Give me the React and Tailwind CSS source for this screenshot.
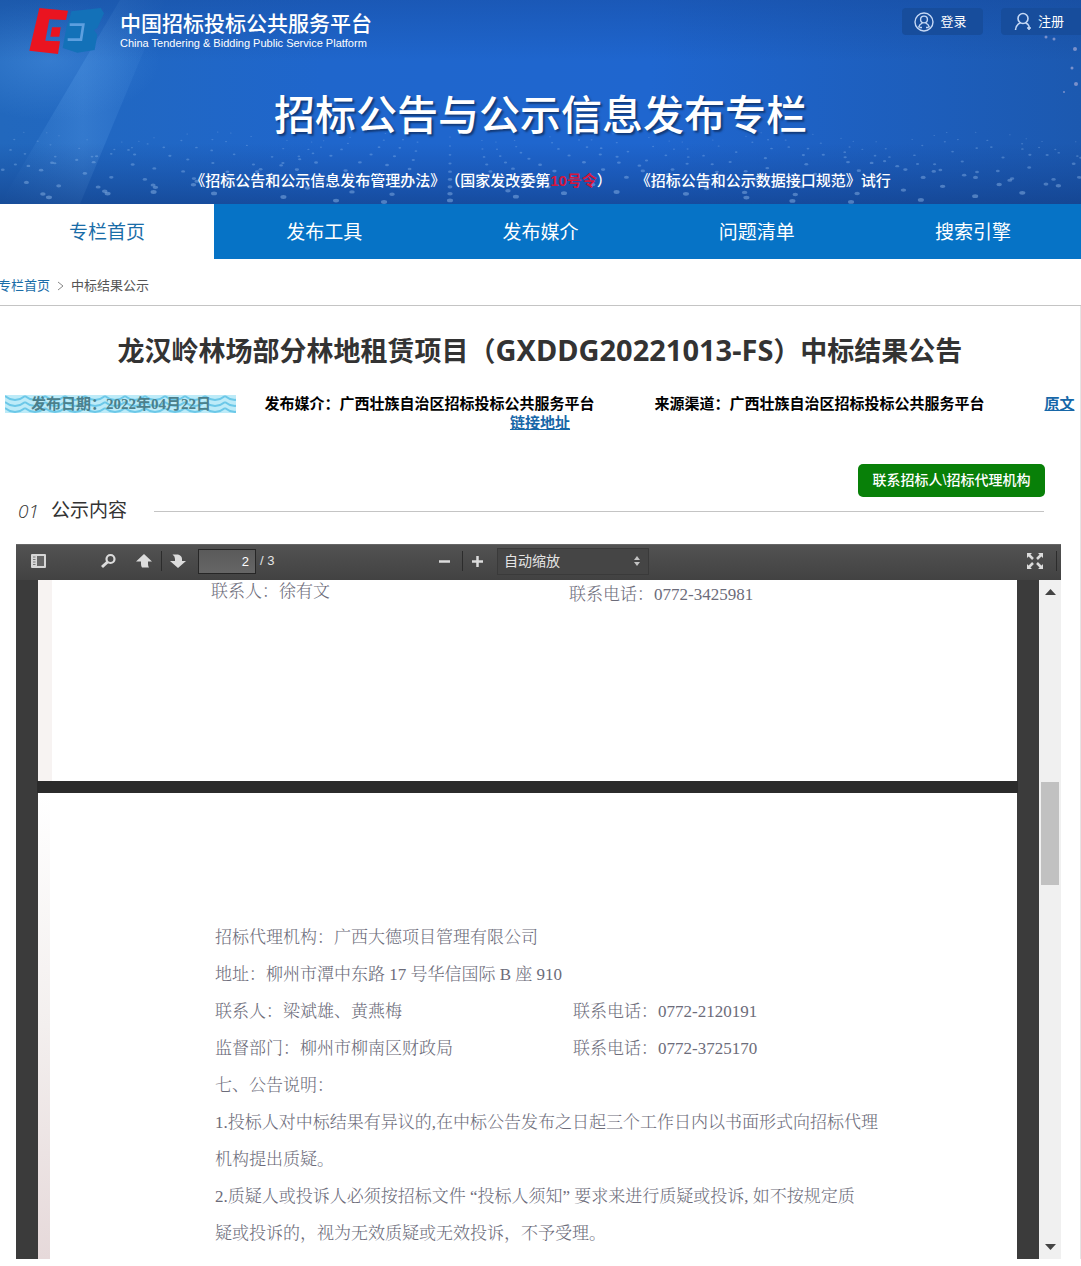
import { useState } from "react";

const navItems = ["专栏首页", "发布工具", "发布媒介", "问题清单", "搜索引擎"];

// dotted wave field at the bottom of the banner, streams fan out from the middle
const dots = [];
for (let i = -34; i <= 34; i++) {
  for (let row = 0; row < 9; row++) {
    const depth = row / 8;
    const x = 450 + i * (24 + depth * depth * 34) + Math.sin(i * 1.7) * 8;
    if (x < -10 || x > 1091) continue;
    const y = 137 + depth * 60 + Math.sin(i * 0.8 + row * 0.3) * 5;
    dots.push({ x, y, r: 0.5 + depth * 1.4, o: 0.25 + depth * 0.15 });
  }
}

function BannerBackground() {
  return (
    <svg
      className="absolute inset-0 h-full w-full"
      viewBox="0 0 1081 204"
      preserveAspectRatio="none"
      aria-hidden="true"
    >
      <defs>
        <linearGradient id="base" x1="0" y1="0" x2="1" y2="0">
          <stop offset="0" stopColor="#2268bd" />
          <stop offset="0.3" stopColor="#1f66cc" />
          <stop offset="0.6" stopColor="#1f66cf" />
          <stop offset="1" stopColor="#1c59b0" />
        </linearGradient>
        <linearGradient id="shade" x1="0" y1="0" x2="0" y2="1">
          <stop offset="0" stopColor="#123f8c" stopOpacity="0.35" />
          <stop offset="0.3" stopColor="#123f8c" stopOpacity="0" />
          <stop offset="0.7" stopColor="#123f8c" stopOpacity="0" />
          <stop offset="1" stopColor="#103a80" stopOpacity="0.6" />
        </linearGradient>
        <linearGradient id="ray" x1="0" y1="0" x2="1" y2="0">
          <stop offset="0" stopColor="#5ea2ea" stopOpacity="0" />
          <stop offset="0.5" stopColor="#5ea2ea" stopOpacity="0.3" />
          <stop offset="1" stopColor="#5ea2ea" stopOpacity="0" />
        </linearGradient>
        <radialGradient id="glow">
          <stop offset="0" stopColor="#4d94e2" stopOpacity="0.45" />
          <stop offset="1" stopColor="#4d94e2" stopOpacity="0" />
        </radialGradient>
      </defs>
      <rect width="1081" height="204" fill="url(#base)" />
      <path d="M120 0H165L80 204H0Z" fill="url(#ray)" />
      <ellipse cx="50" cy="60" rx="110" ry="60" fill="url(#glow)" />
      <rect width="1081" height="204" fill="url(#shade)" />
      {dots.map((d, index) => (
        <ellipse
          key={index}
          cx={d.x}
          cy={d.y}
          rx={d.r * 1.6}
          ry={d.r}
          fill="#a8cdf8"
          opacity={d.o}
        />
      ))}
      <g fill="#b9b6dd" opacity="0.6">
        <circle cx="1046" cy="37" r="1.5" />
        <circle cx="1054" cy="39" r="1.5" />
        <circle cx="1075" cy="49" r="2" />
        <circle cx="1072" cy="68" r="1.5" />
        <circle cx="1076" cy="84" r="2" />
        <circle cx="1064" cy="92" r="1" />
      </g>
    </svg>
  );
}

function Logo() {
  return (
    <svg width="76" height="48" viewBox="84 18 228 144" aria-hidden="true">
      <path
        d="M118 24L204 32L198 60L148 58L136 122L180 124L174 162L88 152Z"
        fill="#ea1420"
      />
      <path d="M156 82H182L178 110H151Z" fill="#ea1420" />
      <path
        d="M214 34L302 24L312 40L292 84L282 90L292 104L284 150L232 158L188 144L192 122L200 78L208 60Z"
        fill="#1371b8"
      />
      <path
        d="M209 74H250L243 119H203"
        fill="none"
        stroke="#5d9fdf"
        strokeWidth="8"
      />
    </svg>
  );
}

function Header() {
  return (
    <header className="relative h-[204px] overflow-hidden text-white">
      <BannerBackground />
      <div className="relative">
        <div className="flex h-[56px] items-start justify-between pl-7">
          <div className="flex gap-4 pt-[6px]">
            <Logo />
            <div>
              <p className="pt-[5px] text-[21px] leading-[26px] font-medium">
                中国招标投标公共服务平台
              </p>
              <p className="text-[11px] leading-[12px]">
                China Tendering &amp; Bidding Public Service Platform
              </p>
            </div>
          </div>
          <div className="flex gap-[18px] pt-2 text-[13px]">
            <button className="flex h-[27px] w-[81px] items-center justify-center gap-[6px] rounded-sm bg-[#174d9c] pr-1">
              <svg width="20" height="20" viewBox="0 0 20 20" fill="none" stroke="#c5d8f5" strokeWidth="1.4">
                <circle cx="10" cy="10" r="9" />
                <circle cx="10" cy="7.5" r="3.4" />
                <path d="M4.5 15.5Q5.5 12 8.5 10.8M15.5 15.5Q14.5 12 11.5 10.8M5.5 15.5H8M12 15.5H14.5" />
              </svg>
              登录
            </button>
            <button className="flex h-[27px] w-[80px] items-center justify-center gap-[6px] rounded-l-sm bg-[#174d9c] pr-1">
              <svg width="18" height="20" viewBox="0 0 18 20" fill="none" stroke="#c5d8f5" strokeWidth="1.6">
                <circle cx="9" cy="6.5" r="5" />
                <path d="M1.5 18Q2 12.5 6.5 10.8M11.5 10.8Q14 12 15 14M15 14V18M13 16H17" />
              </svg>
              注册
            </button>
          </div>
        </div>
        <h1 className="mt-[30px] text-center text-[41px] leading-[60px] font-medium [text-shadow:2px_2px_2px_#123a78]">
          招标公告与公示信息发布专栏
        </h1>
        <p className="mt-[24px] flex justify-center gap-6 text-[15px] leading-[22px] font-medium [text-spacing-trim:space-all]">
          <span>
            《招标公告和公示信息发布管理办法》（国家发改委第
            <span className="font-bold text-[#d3173f]">10号令</span>）
          </span>
          <span>《招标公告和公示数据接口规范》试行</span>
        </p>
      </div>
    </header>
  );
}

function DateStamp() {
  return (
    <span className="relative mr-[28px] inline-block w-[231px] text-center text-[#4b7f8b]">
      <svg className="absolute top-0 left-0 h-[18px] w-full" aria-hidden="true">
        <defs>
          <pattern id="waves" width="20" height="6" patternUnits="userSpaceOnUse">
            <rect width="20" height="6" fill="#bdebf8" />
            <path d="M0 1L5 4L10 5L15 4L20 1" stroke="#6cc8e8" strokeWidth="2" fill="none" />
          </pattern>
        </defs>
        <rect width="100%" height="100%" fill="url(#waves)" />
      </svg>
      <span className="relative">发布日期：2022年04月22日</span>
    </span>
  );
}

function Separator() {
  return <span className="h-5 w-px bg-[#2c2c2c]" />;
}

function Toolbar() {
  const [page, setPage] = useState("2");

  return (
    <div className="flex h-[36px] items-center border-t border-[#666] bg-linear-to-b from-[#525252] to-[#424242] pb-[3px] text-[13px] text-[#e4e4e4]">
      <div className="flex flex-1 items-center pl-[14px]">
        <button aria-label="切换侧栏">
          <svg width="17" height="16" viewBox="0 0 17 16">
            <rect x="1" y="1" width="15" height="14" rx="1" fill="#d6d6d6" />
            <rect x="7" y="3" width="7" height="10" fill="#666" />
            <path d="M3 4H5.5M3 6.5H5.5M3 9H5.5M3 11.5H5.5" stroke="#777" />
          </svg>
        </button>
        <button aria-label="查找" className="ml-[53px]">
          <svg width="17" height="16" viewBox="0 0 17 16" fill="none" stroke="#dcdcdc">
            <circle cx="10.5" cy="6" r="4" strokeWidth="2.2" />
            <path d="M7.5 9L2 14" strokeWidth="3" />
          </svg>
        </button>
        <button aria-label="上一页" className="ml-[19px]">
          <svg width="16" height="16" viewBox="0 0 16 16" fill="#dcdcdc">
            <path d="M8 1L16 8.5H12V11Q12 13 13 14.5H6Q5 13 5 11V8.5H0Z" />
          </svg>
        </button>
        <span className="ml-[9px] flex">
          <Separator />
        </span>
        <button aria-label="下一页" className="ml-[8px]">
          <svg width="16" height="16" viewBox="0 0 16 16" fill="#dcdcdc">
            <path d="M8 15L0 8H5V6Q5 3 2.5 1.5H8Q12 2.5 12 6V8H16Z" />
          </svg>
        </button>
        <input
          aria-label="页码"
          value={page}
          onChange={(e) => setPage(e.target.value)}
          className="ml-[12px] h-[25px] w-[58px] border border-[#262626] bg-linear-to-b from-[#5a5a5a] to-[#666] pr-[6px] text-right text-[13px] text-white"
        />
        <span className="ml-[4px]">/ 3</span>
      </div>
      <div className="flex items-center">
        <button aria-label="缩小">
          <svg width="13" height="13" viewBox="0 0 13 13">
            <path d="M1 6.5H12" stroke="#dcdcdc" strokeWidth="2.5" />
          </svg>
        </button>
        <span className="ml-[11px] flex">
          <Separator />
        </span>
        <button aria-label="放大" className="ml-[8px]">
          <svg width="13" height="13" viewBox="0 0 13 13">
            <path d="M1 6.5H12M6.5 1V12" stroke="#dcdcdc" strokeWidth="2.5" />
          </svg>
        </button>
        <div className="relative ml-[13px] flex items-center">
          <select
            aria-label="缩放"
            className="h-[27px] w-[152px] appearance-none border border-[#3a3a3a] bg-[#454545] pl-[6px] text-[14px]"
          >
            <option>自动缩放</option>
            <option>实际大小</option>
            <option>适合页宽</option>
          </select>
          <svg className="pointer-events-none absolute right-2" width="8" height="10" viewBox="0 0 8 10" fill="#c4c4c4">
            <path d="M4 0L7 4H1ZM4 10L1 6H7Z" />
          </svg>
        </div>
      </div>
      <div className="flex flex-1 items-center justify-end pr-[4px]">
        <button aria-label="全屏" className="mr-[13px]">
          <svg width="16" height="16" viewBox="0 0 16 16" fill="#dcdcdc" stroke="#dcdcdc" strokeWidth="2.5">
            <path d="M2 2L6 6M14 2L10 6M2 14L6 10M14 14L10 10" />
            <path d="M0 0H5L0 5ZM16 0V5L11 0ZM0 16V11L5 16ZM16 16H11L16 11Z" stroke="none" />
          </svg>
        </button>
        <Separator />
      </div>
    </div>
  );
}

function ScanEdge() {
  return (
    <div className="w-[12px] shrink-0 bg-linear-to-b from-white via-[#f3efee] to-[#e6d9da]" />
  );
}

function Viewer() {
  return (
    <section className="mt-[19px] mr-[19px] ml-4">
      <Toolbar />
      <div className="flex bg-[#3b3b3b]">
        <div className="min-w-0 flex-1 px-[22px] text-[17px] font-light text-[#6c6c7a] font-['Liberation_Serif','Noto_Serif_CJK_SC','Noto_Sans_CJK_SC',serif]">
          <div className="flex h-[201px] bg-white">
            <div className="w-[14px] bg-[#f7f3f2]" />
            <div className="grid flex-1 grid-cols-[358px_1fr] pl-[159px] leading-[24px]">
              <p>联系人：徐有文</p>
              <p className="pt-[3px]">联系电话：0772-3425981</p>
            </div>
          </div>
          <div className="-mx-px h-[12px] bg-[#2b2b2b]" />
          <div className="flex bg-white">
            <ScanEdge />
            <div className="flex-1 pt-[126px] pb-[7px] pl-[165px] leading-[37px] whitespace-nowrap">
              <p>招标代理机构：广西大德项目管理有限公司</p>
              <p>地址：柳州市潭中东路 17 号华信国际 B 座 910</p>
              <div className="grid grid-cols-[358px_1fr]">
                <p>联系人：梁斌雄、黄燕梅</p>
                <p>联系电话：0772-2120191</p>
                <p>监督部门：柳州市柳南区财政局</p>
                <p>联系电话：0772-3725170</p>
              </div>
              <p>七、公告说明：</p>
              <p>
                1.投标人对中标结果有异议的,在中标公告发布之日起三个工作日内以书面形式向招标代理
                <br />
                机构提出质疑。
              </p>
              <p>
                2.质疑人或投诉人必须按招标文件 “投标人须知” 要求来进行质疑或投诉, 如不按规定质
                <br />
                疑或投诉的，视为无效质疑或无效投诉，不予受理。
              </p>
            </div>
          </div>
        </div>
        <div className="flex w-[22px] flex-col items-center justify-between bg-[#f0f0f0] py-[9px]">
          <svg width="11" height="6" viewBox="0 0 11 6" fill="#444">
            <path d="M5.5 0L11 6H0Z" />
          </svg>
          <div className="mb-[172px] h-[103px] w-[18px] bg-[#c1c1c1]" />
          <svg width="11" height="6" viewBox="0 0 11 6" fill="#444">
            <path d="M0 0H11L5.5 6Z" />
          </svg>
        </div>
      </div>
    </section>
  );
}

function App() {
  const [active, setActive] = useState(0);

  return (
    <div className="bg-white pb-[7px] text-[#333] font-['Liberation_Sans','Noto_Sans_CJK_SC',sans-serif]">
      <Header />

      <nav className="grid grid-cols-5 bg-[#0673c6] text-center text-[19px] leading-[52px]">
        {navItems.map((item, index) => (
          <a
            key={item}
            href="#"
            onClick={() => setActive(index)}
            className={
              active === index
                ? "border-r-2 border-[#0673c6] bg-white pt-[3px] text-[#1a6da8]"
                : "pt-[3px] text-white"
            }
          >
            {item}
          </a>
        ))}
      </nav>

      <div className="flex h-[47px] items-center gap-[7px] border-b border-[#c4c4c4] pt-[8px] text-[13px] text-[#555]">
        <a href="#" className="-ml-[2px] text-[#1a6da8]">
          专栏首页
        </a>
        <svg width="7" height="10" viewBox="0 0 7 10" fill="none" stroke="#888">
          <path d="M1 1L6 5L1 9" />
        </svg>
        <span>中标结果公示</span>
      </div>

      <main className="border-r border-[#e4e4e4]">
        <h2 className="pt-[24px] text-center text-[27px] leading-[40px] font-bold font-['Noto_Sans','Noto_Sans_CJK_SC',sans-serif]">
          龙汉岭林场部分林地租赁项目（
          <span className="text-[29px]">GXDDG20221013-FS</span>）中标结果公告
        </h2>

        <p className="mt-[24px] text-center text-[15px] leading-[19px] font-bold text-black font-['Liberation_Serif','Noto_Sans_CJK_SC',serif]">
          <DateStamp />
          <span className="mr-[60px] inline-block">
            发布媒介：广西壮族自治区招标投标公共服务平台
          </span>
          <span className="mr-[60px] inline-block">
            来源渠道：广西壮族自治区招标投标公共服务平台
          </span>
          <a href="#" className="text-[#1767a8] underline">
            原文链接地址
          </a>
        </p>

        <div className="mt-[31px] flex justify-end pr-[35px]">
          <button className="h-[33px] w-[187px] rounded-[5px] bg-[#088008] text-[14px] font-medium text-white">
            联系招标人\招标代理机构
          </button>
        </div>

        <div className="flex items-center pr-[36px] pl-[18px] text-[19px] leading-[28px]">
          <span className="mr-[12px] font-['Open_Sans',sans-serif] italic font-light">01</span>
          <h3 className="mr-[27px]">公示内容</h3>
          <div className="h-px flex-1 bg-[#c4c4c4]" />
        </div>

        <Viewer />
      </main>
    </div>
  );
}

export default App;
